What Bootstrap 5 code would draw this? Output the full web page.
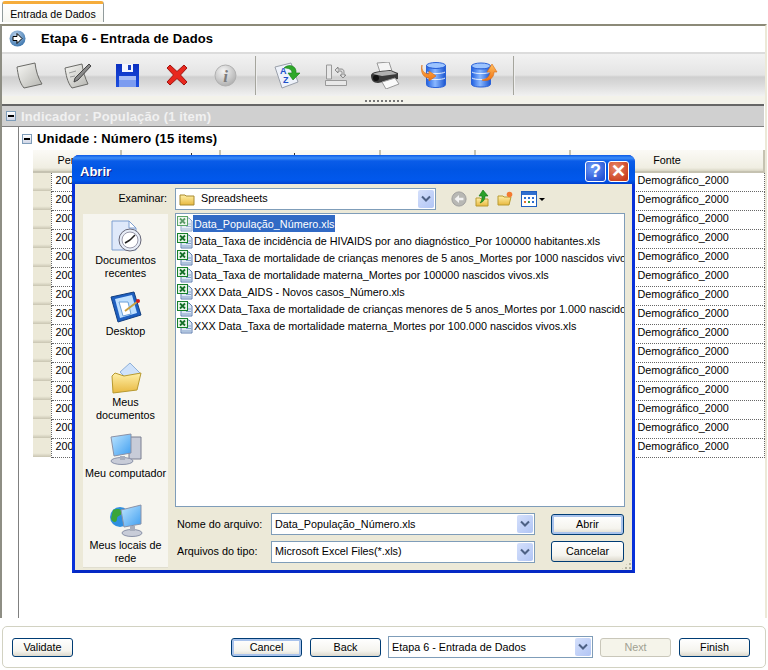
<!DOCTYPE html>
<html lang="pt-BR">
<head>
    <meta charset="UTF-8">
    <title>Entrada de Dados</title>
    <link href="https://cdn.jsdelivr.net/npm/bootstrap@5.3.0/dist/css/bootstrap.min.css" rel="stylesheet">
    <style>
        html, body { height: 100%; }
        body {
            width: 768px; height: 670px; overflow: hidden; position: relative; background: #fff; color: #000;
            font-family: "Liberation Sans", Arial, sans-serif; font-size: 10.8px; line-height: 13px;
        }
        .sprite { position: absolute; width: 0; height: 0; }

        /* tab */
        .tab-strip { height: 24px; padding: 1px 0 0 2px; }
        .xp-tab {
            width: 102px; height: 21px; padding: 4px 0 0; text-align: center; color: #000; font-size: 10.6px;
            border: 1px solid #919b9c; border-bottom: 0; border-top: 3px solid #f5ac3a; border-radius: 3px 3px 0 0;
            background: linear-gradient(#fff, #f7f7f2);
        }

        /* main panel */
        .wizard-panel {
            height: 594px; border-top: 2px solid #8c8a78; border-left: 2px solid #8e8e84; border-right: 2px solid #ece9d8;
            margin-right: 1px;
        }
        .step-head { height: 26px; font-weight: bold; font-size: 13px; letter-spacing: .15px; padding: 0 0 2px 7px; }
        .step-head svg { margin-right: 15px; }
        .tool-bar {
            height: 52px; border-top: 2px solid #dcdcdc; position: relative;
            background: linear-gradient(#f2f2f2 0, #e4e4e4 42%, #cfcfcf 46%, #dadada 60%, #f1f1f1 84%, #f3f2ea 85%, #f3f2ea 100%);
        }
        .tool-bar svg { flex: none; }
        .tool-sep { width: 2px; height: 39px; background: #a5a59d; border-right: 1px solid #eee; }
        .tool-row { height: 42px; padding-left: 14px; }
        .grip-dots {
            position: absolute; left: 363px; bottom: 2px; width: 40px; height: 2px;
            background: repeating-linear-gradient(90deg, #777 0 2px, transparent 2px 4px);
        }
        .group-row {
            height: 23px; background: #d0d0d0; border-top: 2px solid #666; border-bottom: 1px solid #808080;
            color: #f1f1f1; font-weight: bold; font-size: 13px; padding-left: 4px; margin-right: 1px;
        }
        .group-body { margin-left: 16px; border-left: 1px solid #808080; height: 491px; }
        .unit-row { height: 23px; font-weight: bold; font-size: 13px; padding-left: 3px; }
        .tree-toggle {
            width: 10px; height: 10px; border: 1px solid #7f9db9; background: linear-gradient(#fff, #cfd5e6);
            margin-right: 5px; position: relative; flex: none;
        }
        .tree-toggle::after { content: ""; position: absolute; left: 1px; right: 1px; top: 3px; height: 2px; background: #000; }
        .group-text, .unit-text { letter-spacing: .15px; }

        /* grid */
        .xp-grid { margin: 0 0 0 14px; width: 731px; table-layout: fixed; font-size: 10.8px; }
        .xp-grid > thead > tr > th {
            height: 22px; padding: 0; font-weight: normal; text-align: center; color: #000; vertical-align: middle;
            background: linear-gradient(#fbfaf6, #f0eee2 85%, #d8d5c3);
            border: 0; border-bottom: 2px solid #c5c2b1; border-right: 2px solid #c5c2b1;
        }
        .xp-grid > thead > tr > th.tick-a, .xp-grid > thead > tr > th.tick-b {
            background: linear-gradient(#333, #333) no-repeat 69px 3px / 1px 2px, linear-gradient(#fbfaf6, #f0eee2 85%, #d8d5c3);
        }
        .xp-grid > thead > tr > th.tick-b { background-position: 73px 3px, 0 0; }
        .xp-grid > tbody > tr > td {
            height: 19px; padding: 0 0 2px 4px; background: #fff; color: #000; white-space: nowrap; overflow: hidden;
            border: 0; border-bottom: 1px dotted #666; border-right: 1px dotted #e5e5e5; vertical-align: middle;
        }
        .xp-grid > tbody > tr > td.row-mark {
            background: linear-gradient(#ece9d8 80%, #c9c5b2); border-bottom: 0; border-right: 1px dotted #666; padding: 0;
        }
        .xp-grid > tbody > tr > td.src-cell { padding-left: 67px; border-right: 1px dotted #666; }

        /* wizard buttons */
        .foot-bar {
            height: 42px; margin: 8px 2px 0 2px; padding: 0 15px 0 9px; border: 1px solid #d2d2c2; border-radius: 5px; gap: 8px;
        }
        .xp-btn {
            --bs-btn-padding-x: 0; --bs-btn-padding-y: 0; --bs-btn-font-size: 10.8px; --bs-btn-border-radius: 3px;
            --bs-btn-border-width: 1px; --bs-btn-border-color: #003c74; --bs-btn-color: #000; --bs-btn-line-height: 15px;
            --bs-btn-disabled-color: #a1a192; --bs-btn-disabled-border-color: #c9c7ba; --bs-btn-disabled-opacity: 1;
            --bs-btn-hover-color: #000; --bs-btn-hover-border-color: #003c74;
            width: 71px; height: 19px; flex: none;
            background: linear-gradient(#fff, #f5f4ee 70%, #dcd8cc);
        }
        .xp-btn:disabled { background: #f5f4ea; }
        .xp-btn.focus-btn { box-shadow: inset 0 0 0 2px #a9c3ec; }
        .validate-btn { width: 61px; }
        .xp-combo {
            height: 22px; border: 1px solid #7f9db9; background: #fff; padding-left: 3px; white-space: nowrap; overflow: hidden;
        }
        .xp-combo-text { flex: 1 1 auto; overflow: hidden; }
        .xp-arrow {
            flex: none; width: 16px; height: 18px; margin-right: 1px; border-radius: 2px;
            background: linear-gradient(135deg, #d5e0fb, #b1c5f5); display: flex; align-items: center; justify-content: center;
        }
        .nav-combo { width: 205px; margin: 0 -1px; }

        /* dialog */
        .open-dlg {
            position: absolute; left: 72px; top: 155px; width: 563px; height: 418px; border-radius: 7px 7px 0 0;
            background: #0831d9; border: 3px solid #0831d9; border-top: 0; border-bottom-color: #0529c4;
            display: flex; flex-direction: column;
        }
        .dlg-title {
            height: 29px; margin: 0 -3px; padding: 3px 6px 0 8px; color: #fff; font-weight: bold; font-size: 13px; border-radius: 7px 7px 0 0;
            background: linear-gradient(#0a5ae6 0, #3c8cf7 3px, #0a5ce8 6px, #0055e4 50%, #0158ec 85%, #0040d0 100%);
            text-shadow: 1px 1px 0 #0f1a80;
        }
        .cap-btn {
            width: 21px; height: 21px; margin-left: 2px; border: 1px solid #fff; border-radius: 3px; color: #fff;
            font-size: 18px; font-weight: bold; text-align: center; line-height: 19px; text-shadow: none;
        }
        .cap-help { background: radial-gradient(circle at 35% 30%, #6f9cf7, #2452d5 80%); }
        .cap-close { background: radial-gradient(circle at 35% 30%, #e9886b, #c93e1c 80%); }
        .dlg-body { flex: 1 1 auto; background: #ece9d8; position: relative; min-height: 0; }
        .look-row { height: 29px; }
        .look-label { width: 100px; text-align: right; padding-right: 8px; flex: none; }
        .look-combo { width: 261px; flex: none; }
        .look-combo > svg { margin-right: 6px; }
        .look-tools { gap: 8px; margin-left: 15px; }
        .dlg-main { height: 357px; }
        .places-bar { width: 85px; height: 354px; margin: 1px 7px 0 8px; background: #f6f5ef; text-align: center; border-bottom: 1px solid #e0ded0; flex: none; }
        .place-item { height: 71px; padding-top: 6px; }
        .place-item svg { display: block; margin: 0 auto 2px; }
        .place-name { display: block; }
        .file-side { width: 450px; flex: none; }
        .file-list {
            height: 294px; border: 1px solid #7f9db9; background: #fff; padding: 1px 1px 0 1px; overflow: hidden; white-space: nowrap;
        }
        .file-row { height: 17px; }
        .file-row svg { flex: none; }
        .file-name { padding: 0 1px; line-height: 18px; height: 17px; }
        .file-row.picked .file-name { background: #316ac5; color: #fff; }
        .file-row.picked svg { opacity: .7; }
        .form-line { height: 28px; margin-top: 3px; }
        .form-line + .form-line { height: 27px; margin-top: 0; }
        .form-label-xp { width: 96px; padding-left: 2px; flex: none; }
        .form-combo { width: 264px; flex: none; }
        .xp-btn.dlg-btn { width: 73px; height: 21px; margin-left: 16px; }
        .size-grip {
            position: absolute; right: 0; bottom: 0; width: 11px; height: 11px;
            background: radial-gradient(circle at 1px 1px, #b5b2a0 1px, transparent 1.2px) 0 0 / 4px 4px;
            clip-path: polygon(100% 0, 100% 100%, 0 100%);
        }
    </style>
</head>
<body>
    <svg class="sprite" aria-hidden="true">
        <defs>
            <linearGradient id="gPage" x1="0" y1="0" x2="1" y2="1"><stop offset="0" stop-color="#f8f8f5"/><stop offset="1" stop-color="#b5b5b0"/></linearGradient>
            <linearGradient id="gDb" x1="0" y1="0" x2="1" y2="0"><stop offset="0" stop-color="#1f5fe0"/><stop offset=".45" stop-color="#8ab8ff"/><stop offset="1" stop-color="#1a55d0"/></linearGradient>
            <linearGradient id="gOrange" x1="0" y1="0" x2="0" y2="1"><stop offset="0" stop-color="#ffc060"/><stop offset="1" stop-color="#f07010"/></linearGradient>
            <linearGradient id="gScreen" x1="0" y1="0" x2="1" y2="1"><stop offset="0" stop-color="#bfe6ff"/><stop offset="1" stop-color="#3f9ef0"/></linearGradient>
            <linearGradient id="gFolder" x1="0" y1="0" x2="0" y2="1"><stop offset="0" stop-color="#fff0a8"/><stop offset="1" stop-color="#e8b840"/></linearGradient>
            <linearGradient id="gFloppy" x1="0" y1="0" x2="0" y2="1"><stop offset="0" stop-color="#0a2fc0"/><stop offset="1" stop-color="#1d4fe0"/></linearGradient>
            <radialGradient id="gInfo" cx=".4" cy=".3" r=".8"><stop offset="0" stop-color="#f5f5f5"/><stop offset="1" stop-color="#a8a8a8"/></radialGradient>
            <radialGradient id="gArrowBall" cx=".4" cy=".3" r=".8"><stop offset="0" stop-color="#b8d0ea"/><stop offset="1" stop-color="#2f6ca8"/></radialGradient>
        </defs>
        <symbol id="i-chev" viewBox="0 0 10 8"><path d="M1 1.500 5 5.500 9 1.500" fill="none" stroke="#4d6185" stroke-width="2"/></symbol>
        <symbol id="i-xls" viewBox="0 0 16 16">
            <path d="M4 2h8l3 3v10H4z" fill="#dfe8f5" stroke="#5f7fb0"/>
            <path d="M9 8h5M9 10.500h5M5 13h9" stroke="#7f9fc8"/>
            <rect x="0.500" y="0.500" width="10" height="9" fill="#e8f5e8" stroke="#16802a"/>
            <path d="M3 2.500 8 7.500M8 2.500 3 7.500" stroke="#16702a" stroke-width="1.800"/>
        </symbol>
        <symbol id="i-folder" viewBox="0 0 16 16">
            <path d="M1 4h5l1 1h8v9H1z" fill="url(#gFolder)" stroke="#a88a30"/>
        </symbol>
    </svg>

    <div class="tab-strip nav">
        <a class="nav-link xp-tab" href="#">Entrada de Dados</a>
    </div>

    <div class="wizard-panel">
        <div class="step-head d-flex align-items-center">
            <svg width="17" height="17" viewBox="0 0 17 17"><circle cx="8.500" cy="8.500" r="8" fill="url(#gArrowBall)"/><path d="M4 6.500h4V3.500l5 5-5 5v-3H4z" fill="#fff" stroke="#000"/></svg>
            <span>Etapa 6 - Entrada de Dados</span>
        </div>

        <div class="tool-bar">
            <div class="tool-row d-flex align-items-center">
                <!-- novo -->
                <svg width="27" height="27" viewBox="0 0 27 27"><path d="M1 5 19 1C20 9 22 16 26 22L8 26C3 20 2 12 1 5Z" fill="url(#gPage)" stroke="#6a6a66"/></svg>
                <!-- editar -->
                <svg width="28" height="27" viewBox="0 0 28 27" style="margin-left:21px"><path d="M1 6 18 2C19 9 21 16 24 22L8 26C3 20 2 12 1 6Z" fill="url(#gPage)" stroke="#6a6a66"/><path d="M25 2 27 4 14 18 10 20 11 16Z" fill="#8a8a8a" stroke="#444"/><path d="M5 11 12 9M6 15 11 14" stroke="#999"/></svg>
                <!-- salvar -->
                <svg width="23" height="23" viewBox="0 0 23 23" style="margin-left:24px"><path d="M0 0h23v23H0z" fill="url(#gFloppy)"/><path d="M6 0h11v8H6z" fill="#f4f6ff"/><path d="M12 1h3v5h-3z" fill="#1a3fc0"/><path d="M3 12h17v11H3z" fill="#7c9cf0"/><path d="M3 12h17v4H3z" fill="#a8bdf5"/></svg>
                <!-- excluir -->
                <svg width="22" height="22" viewBox="0 0 22 22" style="margin-left:27px"><path d="M4 1 11 7.500 18 1 21 4 14.500 11 21 18 18 21 11 14.500 4 21 1 18 7.500 11 1 4Z" fill="#e8281e" stroke="#a01410"/></svg>
                <!-- info -->
                <svg width="23" height="23" viewBox="0 0 23 23" style="margin-left:26px"><circle cx="11.500" cy="11.500" r="10.500" fill="url(#gInfo)" stroke="#b0b0b0"/><text x="11.500" y="17.500" text-anchor="middle" font-family="Liberation Serif" font-style="italic" font-weight="bold" font-size="17" fill="#7c7c7c">i</text></svg>
                <div class="tool-sep" style="margin-left:18px"></div>
                <!-- ordenar -->
                <svg width="27" height="27" viewBox="0 0 27 27" style="margin-left:17px"><path d="M1 5 17 1 24 20 8 26Z" fill="#eef2fa" stroke="#9aa0aa"/><text x="6" y="12" font-family="Liberation Sans" font-weight="bold" font-size="9" fill="#2050c8">A</text><text x="9" y="21" font-family="Liberation Sans" font-weight="bold" font-size="9" fill="#2050c8">Z</text><path d="M10 6C15 1 23 4 22 11H26L19 18 14 11H18C18 7 14 6 10 6Z" fill="#2fa82a" stroke="#1a7a1a" stroke-width=".6"/></svg>
                <!-- reordenar, desabilitado -->
                <svg width="22" height="23" viewBox="0 0 22 23" style="margin-left:24px"><path d="M1.500 1h5v14h-5zM0.500 16.500h21v5h-21z" fill="#e8e8e8" stroke="#999"/><path d="M10 6 13 3v2h3c3 0 3 2 3 4v2h2l-3 3-3-3h2V9c0-1 0-2-2-2h-2v2z" fill="#dcdcdc" stroke="#777" stroke-width=".8"/></svg>
                <!-- imprimir -->
                <svg width="30" height="27" viewBox="0 0 30 27" style="margin-left:23px"><path d="M7 1 19 0 22 9 10 10Z" fill="#f4f4f4" stroke="#999"/><path d="M1 13C2 10 8 9 20 8L28 11V17L8 21C3 21 1 18 1 13Z" fill="#3a3a3a"/><path d="M3 12C6 10 14 9 21 9L27 12 12 14Z" fill="#b0b0b0"/><path d="M12 20 25 16 29 22 16 27Z" fill="#fafafa" stroke="#999"/><circle cx="6" cy="16" r="3" fill="#111"/></svg>
                <!-- importar -->
                <svg width="26" height="26" viewBox="0 0 26 26" style="margin-left:21px"><ellipse cx="15" cy="3.500" rx="9.500" ry="3" fill="#9cc4ff" stroke="#2a62d8"/><path d="M5.500 3.500v19c0 2 4 3 9.500 3s9.500-1 9.500-3v-19c0 2-4 3-9.500 3s-9.500-1-9.500-3z" fill="url(#gDb)" stroke="#2a62d8"/><path d="M6 10c2 2 16 2 18 0M6 16c2 2 16 2 18 0" fill="none" stroke="#e6f0ff"/><path d="M1 3C0 9 4 12 8 12V9L15 14 8 19V16C3 16-1 11 1 3Z" fill="url(#gOrange)" stroke="#d86a10" stroke-width=".6"/></svg>
                <!-- exportar -->
                <svg width="27" height="26" viewBox="0 0 27 26" style="margin-left:24px"><ellipse cx="10" cy="4" rx="9.500" ry="3" fill="#9cc4ff" stroke="#2a62d8"/><path d="M0.500 4v18c0 2 4 3 9.500 3s9.500-1 9.500-3V4c0 2-4 3-9.500 3S0.500 6 0.500 4z" fill="url(#gDb)" stroke="#2a62d8"/><path d="M1 10c2 2 16 2 18 0M1 16c2 2 16 2 18 0" fill="none" stroke="#e6f0ff"/><path d="M11 18C16 17 19 14 19 10H16L21 2 26 10H23C23 16 18 20 11 18Z" fill="url(#gOrange)" stroke="#d86a10" stroke-width=".6"/></svg>
                <div class="tool-sep" style="margin-left:15px"></div>
            </div>
            <div class="grip-dots"></div>
        </div>

        <div class="group-row d-flex align-items-center">
            <span class="tree-toggle"></span>
            <span class="group-text">Indicador : População (1 item)</span>
        </div>

        <div class="group-body">
            <div class="unit-row d-flex align-items-center">
                <span class="tree-toggle"></span>
                <span class="unit-text">Unidade : Número (15 items)</span>
            </div>
            <table class="table xp-grid">
                <colgroup>
                    <col style="width:18px"><col style="width:70px"><col style="width:99px"><col style="width:160px">
                    <col style="width:95px"><col style="width:95px"><col style="width:194px">
                </colgroup>
                <thead>
                    <tr><th colspan="2">Período</th><th class="tick-a"></th><th class="tick-b"></th><th></th><th></th><th>Fonte</th></tr>
                </thead>
                <tbody id="gridRows"></tbody>
            </table>
        </div>
    </div>

    <div class="foot-bar d-flex align-items-center">
        <button class="btn xp-btn validate-btn me-auto">Validate</button>
        <button class="btn xp-btn focus-btn">Cancel</button>
        <button class="btn xp-btn">Back</button>
        <div class="xp-combo nav-combo d-flex align-items-center">
            <span class="xp-combo-text">Etapa 6 - Entrada de Dados</span>
            <span class="xp-arrow"><svg width="10" height="8"><use href="#i-chev"/></svg></span>
        </div>
        <button class="btn xp-btn" disabled>Next</button>
        <button class="btn xp-btn">Finish</button>
    </div>

    <!-- janela Abrir -->
    <div class="open-dlg">
        <div class="dlg-title d-flex align-items-center">
            <span class="flex-grow-1">Abrir</span>
            <span class="cap-btn cap-help">?</span>
            <span class="cap-btn cap-close">&#10005;</span>
        </div>
        <div class="dlg-body">
            <div class="look-row d-flex align-items-center">
                <span class="look-label">Examinar:</span>
                <div class="xp-combo look-combo d-flex align-items-center">
                    <svg width="16" height="16"><use href="#i-folder"/></svg>
                    <span class="xp-combo-text">Spreadsheets</span>
                    <span class="xp-arrow"><svg width="10" height="8"><use href="#i-chev"/></svg></span>
                </div>
                <div class="look-tools d-flex align-items-center">
                    <svg width="16" height="16" viewBox="0 0 18 18"><circle cx="9" cy="9" r="8" fill="#b8b8b4" stroke="#999"/><path d="M4 9 9 4.500V7.500H14V10.500H9V13.500Z" fill="#f2f2f2"/></svg>
                    <svg width="14" height="17" viewBox="0 0 14 17"><path d="M1 8h4l1 1h7v7H1z" fill="url(#gFolder)" stroke="#b89a30"/><path d="M8 0 13 6H10C10 10 8 12 5 13 7 11 7 8 7 6H4Z" fill="#2aa02a" stroke="#0c700c" stroke-width=".6"/></svg>
                    <svg width="16" height="15" viewBox="0 0 16 15"><path d="M1 5h5l1 1h7l-2 8H1z" fill="url(#gFolder)" stroke="#b89a30"/><circle cx="12.500" cy="3.500" r="2.800" fill="#f47a30"/></svg>
                    <svg width="25" height="16" viewBox="0 0 25 16"><rect x=".5" y=".5" width="15" height="15" fill="#fff" stroke="#1f5fc0"/><path d="M1 1h14v3H1z" fill="#3070d0"/><path d="M3 6h2v2H3zM7 6h2v2H7zM11 6h2v2h-2z" fill="#2f6fd0"/><path d="M3 10h2v2H3z" fill="#e8702a"/><path d="M7 10h2v2H7z" fill="#2f9f3f"/><path d="M11 10h2v2h-2z" fill="#2f6fd0"/><path d="M18 7h6l-3 3z" fill="#000"/></svg>
                </div>
            </div>
            <div class="dlg-main d-flex">
                <div class="places-bar">
                    <div class="place-item">
                        <svg width="32" height="32" viewBox="0 0 32 32"><path d="M2 1h17l7 7v22H2z" fill="#dfe9fa" stroke="#7f9fd0"/><path d="M19 1v7h7z" fill="#fff" stroke="#7f9fd0"/><circle cx="20" cy="20" r="11" fill="#e8eef8" stroke="#667"/><circle cx="20" cy="20" r="8" fill="#fff" stroke="#99a"/><path d="M20 20 25 15M20 20 15 23" stroke="#222" stroke-width="1.500"/></svg>
                        <span class="place-name">Documentos<br>recentes</span>
                    </div>
                    <div class="place-item">
                        <svg width="32" height="32" viewBox="0 0 32 32"><path d="M1 6 24 1 31 24 8 31Z" fill="#1e5fc0" stroke="#123f80"/><path d="M5 8 22 4 27 22 10 27Z" fill="#bfe0ff"/><path d="M9 11h9l3 12-8 2z" fill="#fff" stroke="#6aa0d8"/><path d="M15 20 27 11" stroke="#c8a040" stroke-width="2"/><circle cx="28" cy="10" r="2" fill="#d02020"/></svg>
                        <span class="place-name">Desktop</span>
                    </div>
                    <div class="place-item">
                        <svg width="32" height="32" viewBox="0 0 32 32"><path d="M10 10 20 1 30 11 20 20Z" fill="#cfe2fa" stroke="#8fb0d8"/><path d="M2 14 5 11 14 14 31 11 27 28 3 31Z" fill="url(#gFolder)" stroke="#b89a30"/></svg>
                        <span class="place-name">Meus<br>documentos</span>
                    </div>
                    <div class="place-item">
                        <svg width="34" height="32" viewBox="0 0 34 32"><path d="M20 4h12v22H20z" fill="#c8ccd8" stroke="#7a7f90"/><path d="M2 4 22 1V20L5 23Z" fill="url(#gScreen)" stroke="#8a92a8"/><ellipse cx="13" cy="28" rx="11" ry="3.500" fill="#c8ccd8" stroke="#8a92a8"/><path d="M11 23h5v4h-5z" fill="#a8aebc"/></svg>
                        <span class="place-name">Meu computador</span>
                    </div>
                    <div class="place-item">
                        <svg width="34" height="33" viewBox="0 0 34 33"><circle cx="11" cy="13" r="10" fill="#2f8fe0"/><path d="M4 6C8 4 14 5 13 9 12 12 8 11 8 15 8 19 4 19 2 15Z" fill="#3aa53a"/><path d="M12 6 32 1V20L15 23Z" fill="url(#gScreen)" stroke="#8a92a8"/><ellipse cx="23" cy="29" rx="10" ry="3.500" fill="#c8ccd8" stroke="#8a92a8"/><path d="M21 22h5v5h-5z" fill="#a8aebc"/></svg>
                        <span class="place-name">Meus locais de<br>rede</span>
                    </div>
                </div>
                <div class="file-side">
                    <div class="file-list">
                        <div class="file-row picked d-flex align-items-center"><svg width="16" height="16"><use href="#i-xls"/></svg><span class="file-name">Data_População_Número.xls</span></div>
                        <div class="file-row d-flex align-items-center"><svg width="16" height="16"><use href="#i-xls"/></svg><span class="file-name">Data_Taxa de incidência de HIVAIDS por ano diagnóstico_Por 100000 habitantes.xls</span></div>
                        <div class="file-row d-flex align-items-center"><svg width="16" height="16"><use href="#i-xls"/></svg><span class="file-name">Data_Taxa de mortalidade de crianças menores de 5 anos_Mortes por 1000 nascidos vivos.xls</span></div>
                        <div class="file-row d-flex align-items-center"><svg width="16" height="16"><use href="#i-xls"/></svg><span class="file-name">Data_Taxa de mortalidade materna_Mortes por 100000 nascidos vivos.xls</span></div>
                        <div class="file-row d-flex align-items-center"><svg width="16" height="16"><use href="#i-xls"/></svg><span class="file-name">XXX Data_AIDS - Novos casos_Número.xls</span></div>
                        <div class="file-row d-flex align-items-center"><svg width="16" height="16"><use href="#i-xls"/></svg><span class="file-name">XXX Data_Taxa de mortalidade de crianças menores de 5 anos_Mortes por 1.000 nascidos vivos.xls</span></div>
                        <div class="file-row d-flex align-items-center"><svg width="16" height="16"><use href="#i-xls"/></svg><span class="file-name">XXX Data_Taxa de mortalidade materna_Mortes por 100.000 nascidos vivos.xls</span></div>
                    </div>
                    <div class="form-line d-flex align-items-center">
                        <span class="form-label-xp">Nome do arquivo:</span>
                        <div class="xp-combo form-combo d-flex align-items-center">
                            <span class="xp-combo-text">Data_População_Número.xls</span>
                            <span class="xp-arrow"><svg width="10" height="8"><use href="#i-chev"/></svg></span>
                        </div>
                        <button class="btn xp-btn dlg-btn focus-btn">Abrir</button>
                    </div>
                    <div class="form-line d-flex align-items-center">
                        <span class="form-label-xp">Arquivos do tipo:</span>
                        <div class="xp-combo form-combo d-flex align-items-center">
                            <span class="xp-combo-text">Microsoft Excel Files(*.xls)</span>
                            <span class="xp-arrow"><svg width="10" height="8"><use href="#i-chev"/></svg></span>
                        </div>
                        <button class="btn xp-btn dlg-btn">Cancelar</button>
                    </div>
                </div>
            </div>
            <div class="size-grip"></div>
        </div>
    </div>

    <script src="https://cdn.jsdelivr.net/npm/bootstrap@5.3.0/dist/js/bootstrap.bundle.min.js"></script>
    <script>
        // Linhas da grade
        const linhas = [];
        for (let i = 0; i < 15; i++) {
            linhas.push(`<tr><td class="row-mark"></td><td>2000</td><td></td><td></td><td></td><td></td><td class="src-cell">Demográfico_2000</td></tr>`);
        }
        document.getElementById("gridRows").innerHTML = linhas.join("");
    </script>
</body>
</html>
